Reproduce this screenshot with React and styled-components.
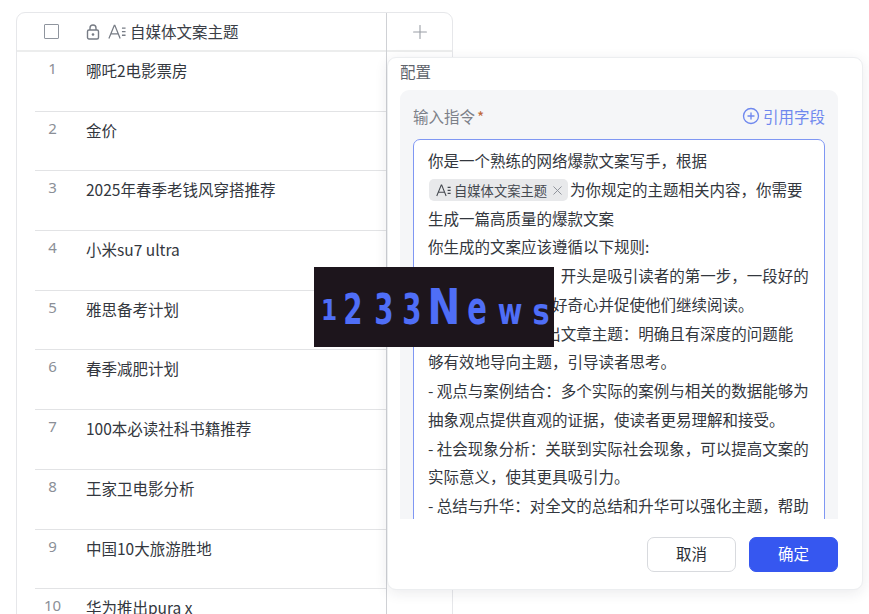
import styled, { createGlobalStyle } from "styled-components";
import { CirclePlus, Plus, X } from "lucide-react";

const GlobalStyle = createGlobalStyle`
  html, body {
    margin: 0;
    height: 614px;
    overflow: hidden;
    background: #fff;
    font-family: "Noto Sans CJK SC", "Noto Sans", sans-serif;
    font-size: 15.5px;
    color: #2b2f36;
  }
`;

const Page = styled.div`
  position: relative;
  height: 614px;
  padding: 12px 0 0 16px;
  box-sizing: border-box;
  overflow: hidden;
`;

const Table = styled.div`
  width: 437px;
  height: 640px;
  box-sizing: border-box;
  border: 1px solid #e6e7ea;
  border-radius: 9px;
  display: grid;
  grid-template-columns: 370px 1fr;
  overflow: hidden;
`;

const MainColumn = styled.div`
  border-right: 1.5px solid #cfd1d5;
`;

const AddColumn = styled.div`
  display: flex;
  flex-direction: column;
`;

const AddHead = styled.div`
  height: 39px;
  box-sizing: border-box;
  display: flex;
  align-items: center;
  justify-content: center;
  border-bottom: 2px solid #eceded;
  color: #9a9ea6;
`;

const Head = styled.div`
  height: 39px;
  box-sizing: border-box;
  display: flex;
  align-items: center;
  border-bottom: 2px solid #eceded;
`;

const Checkbox = styled.span`
  width: 13px;
  height: 13px;
  margin-left: 27px;
  border: 1.5px solid #8f959e;
  border-radius: 1px;
`;

const HeadIcons = styled.div`
  display: flex;
  align-items: center;
  gap: 8px;
  margin-left: 27px;
  margin-right: 4px;
  color: #777c85;
`;

const HeadTitle = styled.span`
  color: #3a3e46;
  line-height: 1;
`;

const Row = styled.div`
  height: 59.7px;
  box-sizing: border-box;
  margin-left: 18px;
  border-bottom: 1.5px solid #e2e3e5;
  display: grid;
  grid-template-columns: 51px 1fr;
  padding-top: 5px;
`;

const RowNumber = styled.span`
  font-family: "Noto Sans", sans-serif;
  font-size: 15px;
  line-height: 24px;
  color: #8b8f97;
  text-align: center;
  padding-right: 16px;
  margin-top: -1px;
`;

const RowText = styled.span`
  line-height: 26px;
  color: #33373e;
`;

const Panel = styled.div`
  position: absolute;
  left: 387px;
  top: 57px;
  width: 476px;
  height: 533px;
  box-sizing: border-box;
  padding: 3px 24px 17px 12px;
  background: #fff;
  border-radius: 9px;
  border: 1px solid #eceef0;
  box-shadow: 0 3px 14px rgba(30, 35, 50, 0.09);
  display: flex;
  flex-direction: column;
`;

const PanelTitle = styled.div`
  flex-shrink: 0;
  line-height: 20px;
  height: 29px;
  color: #5f646c;
`;

const Section = styled.div`
  height: 429px;
  box-sizing: border-box;
  flex-shrink: 0;
  background: #f5f6f8;
  border-radius: 9px 9px 0 0;
  padding: 14px 13px 0;
  overflow: hidden;
`;

const LabelRow = styled.div`
  display: flex;
  justify-content: space-between;
  align-items: center;
  height: 24px;
  margin-bottom: 11px;
`;

const Label = styled.span`
  color: #7c8088;
`;

const Star = styled.span`
  color: #c0693a;
  margin-left: 2px;
`;

const RefLink = styled.span`
  display: inline-flex;
  align-items: center;
  gap: 3px;
  color: #6f88ee;
`;

const Editor = styled.div`
  width: 412px;
  box-sizing: border-box;
  padding: 6px 14px;
  background: #fff;
  border: 1px solid #7f97f3;
  border-radius: 7px;
  line-height: 28.75px;
  height: 500px;
  color: #33373e;
`;

const Line = styled.div`
  white-space: nowrap;
`;

const Chip = styled.span`
  display: inline-flex;
  align-items: center;
  height: 22px;
  padding: 0 3px 0 7px;
  margin: 0 2px 0 1px;
  gap: 3px;
  vertical-align: -1px;
  border-radius: 5px;
  background: #e8e9eb;
  color: #44484f;
  font-size: 13.3px;
  line-height: 1;
`;

const Footer = styled.div`
  display: flex;
  flex-shrink: 0;
  justify-content: flex-end;
  gap: 13px;
  margin-top: 18px;
`;

const Button = styled.button`
  width: 89px;
  height: 35px;
  box-sizing: border-box;
  padding: 0 0 3px;
  font: inherit;
  border-radius: 7px;
  border: 1px solid ${(p) => (p.$primary ? "#3657f0" : "#d8dade")};
  background: ${(p) => (p.$primary ? "#3657f0" : "#fff")};
  color: ${(p) => (p.$primary ? "#fff" : "#2b2f36")};
`;

const Watermark = styled.div`
  position: absolute;
  left: 314px;
  top: 267px;
  width: 240px;
  height: 80px;
  background: #1d151c;
  color: #4f6ef7;
  font-family: "DejaVu Sans", sans-serif;
  font-weight: 700;
`;

const Glyph = styled.span`
  position: absolute;
  left: ${(p) => p.$center - 20}px;
  bottom: ${(p) => p.$bottom}px;
  width: 40px;
  display: flex;
  justify-content: center;
  font-size: ${(p) => p.$size}px;
  line-height: 1;
  transform: scaleX(${(p) => p.$sx});
  transform-origin: center bottom;
`;

function LockIcon() {
  return (
    <svg width="14" height="16" viewBox="0 0 14 16" fill="none" stroke="currentColor" strokeWidth="1.4">
      <rect x="1.5" y="6" width="11" height="9" rx="1.5" />
      <path d="M4 6V4a3 3 0 0 1 6 0v2" />
      <circle cx="7" cy="10.5" r="1.3" fill="currentColor" stroke="none" />
    </svg>
  );
}

function TextFieldIcon({ size = 18 }) {
  return (
    <svg width={size} height={size * 0.85} viewBox="0 0 20 17" fill="none" stroke="currentColor" strokeWidth="1.4">
      <path d="M1 16 7 1.5h.6L13.5 16M3.2 11h8.5" />
      <path d="M15.5 4.5h4M15.5 8.5h4M15.5 12.5h4" />
    </svg>
  );
}

const topics = [
  "哪吒2电影票房",
  "金价",
  "2025年春季老钱风穿搭推荐",
  "小米su7 ultra",
  "雅思备考计划",
  "春季减肥计划",
  "100本必读社科书籍推荐",
  "王家卫电影分析",
  "中国10大旅游胜地",
  "华为推出pura x",
];

const lines = [
  "生成一篇高质量的爆款文案",
  "你生成的文案应该遵循以下规则:",
  "- 引人入胜的开头：开头是吸引读者的第一步，一段好的",
  "开头能引发读者的好奇心并促使他们继续阅读。",
  "- 通过提出问题引出文章主题：明确且有深度的问题能",
  "够有效地导向主题，引导读者思考。",
  "- 观点与案例结合：多个实际的案例与相关的数据能够为",
  "抽象观点提供直观的证据，使读者更易理解和接受。",
  "- 社会现象分析：关联到实际社会现象，可以提高文案的",
  "实际意义，使其更具吸引力。",
  "- 总结与升华：对全文的总结和升华可以强化主题，帮助",
];

const glyphs = [
  { c: "1", center: 14.5, size: 29, sx: 0.8, bottom: 22.5 },
  { c: "2", center: 39, size: 42, sx: 0.66, bottom: 16.5 },
  { c: "3", center: 70, size: 42, sx: 0.66, bottom: 16.5 },
  { c: "3", center: 98, size: 42, sx: 0.66, bottom: 16.5 },
  { c: "N", center: 130, size: 49, sx: 0.8, bottom: 15.5 },
  { c: "e", center: 162.5, size: 46, sx: 0.63, bottom: 16 },
  { c: "w", center: 195.5, size: 36, sx: 0.74, bottom: 17.5 },
  { c: "s", center: 226.5, size: 36, sx: 0.8, bottom: 17.5 },
];

export default function App() {
  return (
    <Page>
      <GlobalStyle />
      <Table>
        <MainColumn>
          <Head>
            <Checkbox />
            <HeadIcons>
              <LockIcon />
              <TextFieldIcon />
            </HeadIcons>
            <HeadTitle>自媒体文案主题</HeadTitle>
          </Head>
          {topics.map((topic, i) => (
            <Row key={topic}>
              <RowNumber>{i + 1}</RowNumber>
              <RowText>{topic}</RowText>
            </Row>
          ))}
        </MainColumn>
        <AddColumn>
          <AddHead>
            <Plus size={22} strokeWidth={1.2} />
          </AddHead>
        </AddColumn>
      </Table>

      <Panel>
        <PanelTitle>配置</PanelTitle>
        <Section>
          <LabelRow>
            <Label>
              输入指令<Star>*</Star>
            </Label>
            <RefLink>
              <CirclePlus size={18} strokeWidth={1.8} />
              引用字段
            </RefLink>
          </LabelRow>
          <Editor>
            <Line>你是一个熟练的网络爆款文案写手，根据</Line>
            <Line>
              <Chip>
                <TextFieldIcon size={15} />
                自媒体文案主题
                <X size={15} strokeWidth={1.5} color="#8b8f97" />
              </Chip>
              为你规定的主题相关内容，你需要
            </Line>
            {lines.map((line) => (
              <Line key={line}>{line}</Line>
            ))}
          </Editor>
        </Section>
        <Footer>
          <Button>取消</Button>
          <Button $primary>确定</Button>
        </Footer>
      </Panel>

      <Watermark>
        {glyphs.map((g, i) => (
          <Glyph key={i} $center={g.center} $size={g.size} $sx={g.sx} $bottom={g.bottom}>
            {g.c}
          </Glyph>
        ))}
      </Watermark>
    </Page>
  );
}
